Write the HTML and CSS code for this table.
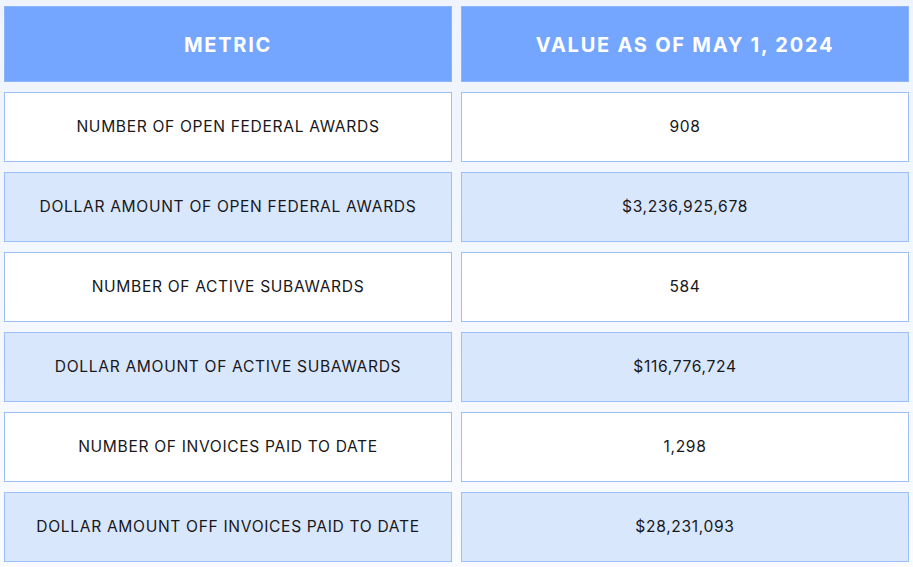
FILE: index.html
```html
<!DOCTYPE html>
<html>
<head>
<meta charset="utf-8">
<link rel="stylesheet" href="styles.css">
</head>
<body>
<div class="table">
  <div class="cell head">METRIC</div>
  <div class="cell head">VALUE AS OF MAY 1, 2024</div>
  <div class="cell">NUMBER OF OPEN FEDERAL AWARDS</div>
  <div class="cell">908</div>
  <div class="cell alt">DOLLAR AMOUNT OF OPEN FEDERAL AWARDS</div>
  <div class="cell alt">$3,236,925,678</div>
  <div class="cell">NUMBER OF ACTIVE SUBAWARDS</div>
  <div class="cell">584</div>
  <div class="cell alt">DOLLAR AMOUNT OF ACTIVE SUBAWARDS</div>
  <div class="cell alt">$116,776,724</div>
  <div class="cell">NUMBER OF INVOICES PAID TO DATE</div>
  <div class="cell">1,298</div>
  <div class="cell alt">DOLLAR AMOUNT OFF INVOICES PAID TO DATE</div>
  <div class="cell alt">$28,231,093</div>
</div>
</body>
</html>
```
FILE: styles.css
```css
html, body {
  margin: 0;
  height: 100%;
}
body {
  background: linear-gradient(180deg, #eef3fd 0%, #f9fbff 100%);
  font-family: Inter, "Noto Sans", sans-serif;
}
.table {
  display: grid;
  grid-template-columns: 448px 448px;
  grid-template-rows: 76px repeat(6, 70px);
  column-gap: 9px;
  row-gap: 10px;
  padding: 6px 0 0 4px;
}
.cell {
  box-sizing: border-box;
  display: flex;
  align-items: center;
  justify-content: center;
  padding-bottom: 2px;
  background: #ffffff;
  border: 1px solid #9dbff9;
  color: #18181c;
  font-size: 15.6px;
  letter-spacing: 0.66px;
}
.cell.alt {
  background: #d9e7fd;
}
.cell.head {
  padding-bottom: 0;
  padding-top: 2px;
  background: #74a6ff;
  border-color: #8db5fb;
  color: #ffffff;
  font-weight: 700;
  font-size: 20px;
  letter-spacing: 1.75px;
}
```
